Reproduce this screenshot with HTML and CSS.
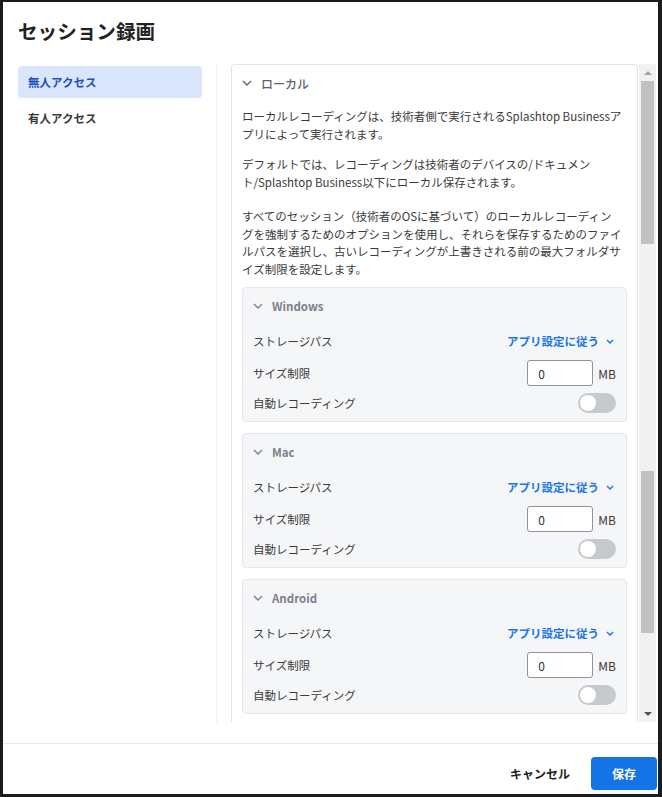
FILE: index.html
```html
<!DOCTYPE html>
<html lang="ja">
<head>
<meta charset="utf-8">
<title>セッション録画</title>
<link rel="stylesheet" href="styles.css">
</head>
<body>
<div class="dialog">
  <h1 class="title">セッション録画</h1>
  <div class="main">
    <nav class="sidebar">
      <div class="nav-item active">無人アクセス</div>
      <div class="nav-item">有人アクセス</div>
    </nav>
    <div class="content">
      <div class="scroller">
        <section class="card">
          <div class="card-head">
            <svg class="chev" viewBox="0 0 10 6" width="10" height="6"><path d="M1 1l4 4 4-4" fill="none" stroke="currentColor" stroke-width="1.4"/></svg>
            <span>ローカル</span>
          </div>
          <p class="desc p1">ローカルレコーディングは、技術者側で実行されるSplashtop Businessア<br>プリによって実行されます。</p>
          <p class="desc p2">デフォルトでは、レコーディングは技術者のデバイスの/ドキュメン<br>ト/Splashtop Business以下にローカル保存されます。</p>
          <p class="desc p3">すべてのセッション（技術者のOSに基づいて）のローカルレコーディン<br>グを強制するためのオプションを使用し、それらを保存するためのファイ<br>ルパスを選択し、古いレコーディングが上書きされる前の最大フォルダサ<br>イズ制限を設定します。</p>

          <div class="os-card">
            <div class="os-head">
              <svg class="chev" viewBox="0 0 10 6" width="10" height="6"><path d="M1 1l4 4 4-4" fill="none" stroke="currentColor" stroke-width="1.4"/></svg>
              <span>Windows</span>
            </div>
            <div class="rows">
              <div class="row"><span class="label">ストレージパス</span><span class="select">アプリ設定に従う<svg viewBox="0 0 8 5" width="8" height="5"><path d="M1 1l3 3 3-3" fill="none" stroke="currentColor" stroke-width="1.4"/></svg></span></div>
              <div class="row"><span class="label">サイズ制限</span><span class="size"><span class="input">0</span><span class="unit">MB</span></span></div>
              <div class="row short"><span class="label">自動レコーディング</span><span class="toggle"></span></div>
            </div>
          </div>

          <div class="os-card">
            <div class="os-head">
              <svg class="chev" viewBox="0 0 10 6" width="10" height="6"><path d="M1 1l4 4 4-4" fill="none" stroke="currentColor" stroke-width="1.4"/></svg>
              <span>Mac</span>
            </div>
            <div class="rows">
              <div class="row"><span class="label">ストレージパス</span><span class="select">アプリ設定に従う<svg viewBox="0 0 8 5" width="8" height="5"><path d="M1 1l3 3 3-3" fill="none" stroke="currentColor" stroke-width="1.4"/></svg></span></div>
              <div class="row"><span class="label">サイズ制限</span><span class="size"><span class="input">0</span><span class="unit">MB</span></span></div>
              <div class="row short"><span class="label">自動レコーディング</span><span class="toggle"></span></div>
            </div>
          </div>

          <div class="os-card">
            <div class="os-head">
              <svg class="chev" viewBox="0 0 10 6" width="10" height="6"><path d="M1 1l4 4 4-4" fill="none" stroke="currentColor" stroke-width="1.4"/></svg>
              <span>Android</span>
            </div>
            <div class="rows">
              <div class="row"><span class="label">ストレージパス</span><span class="select">アプリ設定に従う<svg viewBox="0 0 8 5" width="8" height="5"><path d="M1 1l3 3 3-3" fill="none" stroke="currentColor" stroke-width="1.4"/></svg></span></div>
              <div class="row"><span class="label">サイズ制限</span><span class="size"><span class="input">0</span><span class="unit">MB</span></span></div>
              <div class="row short"><span class="label">自動レコーディング</span><span class="toggle"></span></div>
            </div>
          </div>
        </section>
        <div class="scrollbar">
          <div class="sb-btn up"></div>
          <div class="thumb first"></div>
          <div class="thumb second"></div>
          <div class="sb-fill"></div>
          <div class="sb-btn down"></div>
        </div>
      </div>
    </div>
  </div>
  <footer class="footer">
    <button class="btn cancel">キャンセル</button>
    <button class="btn save">保存</button>
  </footer>
</div>
</body>
</html>
```
FILE: styles.css
```css
* { box-sizing: border-box; }
html, body { margin: 0; padding: 0; background: #fff; }
body {
  font-family: "Noto Sans CJK JP", "Noto Sans", sans-serif;
  color: #333;
}
.dialog {
  width: 662px;
  height: 797px;
  border-style: solid;
  border-color: #1c1c1c;
  border-width: 2px 4px 3px 3px;
  display: flex;
  flex-direction: column;
  background: #fff;
}
.title {
  margin: 0;
  height: 61px;
  padding: 15px 0 0 15px;
  font-size: 19.6px;
  line-height: 28px;
  font-weight: 700;
  color: #222;
}
.main {
  display: flex;
  height: 659px;
}
.sidebar {
  flex: none;
  width: 214px;
  padding: 3px 14px 0 15px;
  border-right: 1px solid #eceef2;
  display: flex;
  flex-direction: column;
  gap: 4px;
}
.nav-item {
  height: 32px;
  padding-left: 10px;
  display: flex;
  align-items: center;
  font-size: 11.5px;
  font-weight: 700;
  color: #3a3a3a;
  border-radius: 4px;
}
.nav-item.active {
  background: #dae6fb;
  color: #1f4fc0;
}
.content {
  flex: 1;
  min-width: 0;
  padding: 1px 2px 0 14px;
}
.scroller {
  display: flex;
  height: 658px;
  overflow: hidden;
}
.card {
  flex: 1;
  min-width: 0;
  border: 1px solid #e2e5e9;
  border-bottom: 0;
  border-radius: 4px 4px 0 0;
  padding: 0 10px;
}
.card-head {
  display: flex;
  align-items: center;
  gap: 9px;
  height: 18px;
  margin-top: 9px;
  font-size: 12px;
  font-weight: 500;
  color: #5f6470;
}
.chev { flex: none; display: block; }
.desc {
  margin: 0;
  font-size: 11.5px;
  line-height: 17.5px;
  white-space: nowrap;
  color: #3a3a3a;
}
.desc.p1 { margin-top: 16px; }
.desc.p2 { margin-top: 13px; }
.desc.p3 { margin-top: 17px; }
.os-card {
  margin-top: 9px;
  background: #f5f6f8;
  border: 1px solid #e3e6ea;
  border-radius: 4px;
  padding: 9px 10px 8px;
}
.os-card + .os-card { margin-top: 11px; }
.os-head {
  height: 18px;
  display: flex;
  align-items: center;
  gap: 9px;
  font-size: 11.5px;
  font-weight: 700;
  color: #7c818c;
}
.rows {
  margin-top: 13px;
  display: flex;
  flex-direction: column;
  gap: 6px;
}
.row {
  display: flex;
  align-items: center;
  justify-content: space-between;
  height: 26px;
  font-size: 11.5px;
  color: #3a3a3a;
}
.row.short { height: 21px; }
.select {
  display: flex;
  align-items: center;
  gap: 7px;
  color: #1a73e8;
  font-weight: 700;
}
.select svg { display: block; margin-right: 2px; }
.size { display: flex; align-items: center; }
.input {
  width: 66px;
  height: 26px;
  border: 1px solid #8e939c;
  border-radius: 3px;
  background: #fff;
  padding-left: 10px;
  display: flex;
  align-items: center;
  font-size: 12px;
  color: #333;
}
.unit {
  margin-left: 5px;
  font-size: 12px;
  color: #3a3a3a;
}
.toggle {
  position: relative;
  width: 38px;
  height: 20px;
  border-radius: 10px;
  background: #c6c9ce;
}
.toggle::after {
  content: "";
  position: absolute;
  left: 2px;
  top: 2px;
  width: 16px;
  height: 16px;
  border-radius: 50%;
  background: #fff;
}
.scrollbar {
  flex: none;
  width: 18px;
  border-left: 1px solid #fff;
  background: #f1f1f1;
  display: flex;
  flex-direction: column;
  align-items: center;
}
.sb-btn {
  height: 17px;
  width: 100%;
  display: flex;
  align-items: center;
  justify-content: center;
}
.sb-btn.up::before {
  content: "";
  border-style: solid;
  border-width: 0 4px 4px 4px;
  border-color: transparent transparent #a3a3a3 transparent;
}
.sb-btn.down::before {
  content: "";
  border-style: solid;
  border-width: 4px 4px 0 4px;
  border-color: #505050 transparent transparent transparent;
}
.thumb {
  flex: none;
  width: 13px;
  background: #c1c1c1;
}
.thumb.first { height: 163px; }
.thumb.second { height: 162px; margin-top: 227px; }
.sb-fill { flex: 1; }
.footer {
  margin-top: 21px;
  border-top: 1px solid #e6e8ec;
  flex: 1;
  display: flex;
  justify-content: flex-end;
  align-items: flex-start;
  gap: 21px;
  padding: 13px 1px 0 0;
}
.btn {
  font: inherit;
  font-size: 12px;
  font-weight: 700;
  height: 33px;
  border: 0;
  border-radius: 4px;
  padding: 0;
  cursor: pointer;
}
.btn.cancel {
  background: transparent;
  color: #222;
}
.btn.save {
  width: 66px;
  background: #1473e6;
  color: #fff;
}
```
